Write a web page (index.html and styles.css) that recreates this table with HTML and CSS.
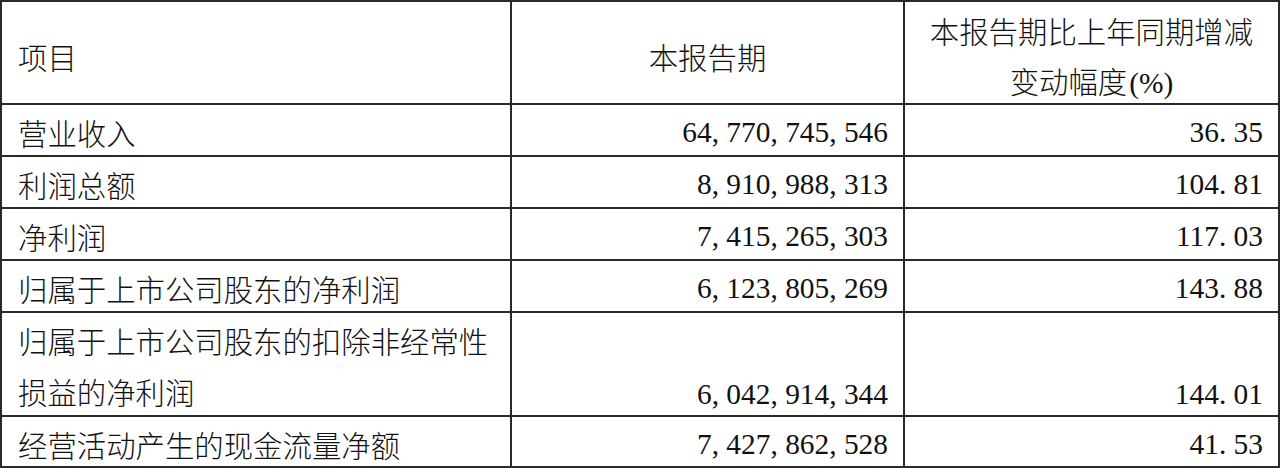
FILE: index.html
```html
<!DOCTYPE html>
<html lang="zh-CN">
<head>
<meta charset="utf-8">
<title>主要会计数据</title>
<link rel="stylesheet" href="styles.css">
</head>
<body>
<div class="sheet">
  <div class="cell head label"><span>项目</span></div>
  <div class="cell head mid"><span>本报告期</span></div>
  <div class="cell head mid"><span>本报告期比上年同期增减<br>变动幅度<span class="latin">(%)</span></span></div>

  <div class="cell label">营业收入</div>
  <div class="cell num">64<span class="sep">,</span>770<span class="sep">,</span>745<span class="sep">,</span>546</div>
  <div class="cell num">36<span class="sep">.</span>35</div>

  <div class="cell label">利润总额</div>
  <div class="cell num">8<span class="sep">,</span>910<span class="sep">,</span>988<span class="sep">,</span>313</div>
  <div class="cell num">104<span class="sep">.</span>81</div>

  <div class="cell label">净利润</div>
  <div class="cell num">7<span class="sep">,</span>415<span class="sep">,</span>265<span class="sep">,</span>303</div>
  <div class="cell num">117<span class="sep">.</span>03</div>

  <div class="cell label">归属于上市公司股东的净利润</div>
  <div class="cell num">6<span class="sep">,</span>123<span class="sep">,</span>805<span class="sep">,</span>269</div>
  <div class="cell num">143<span class="sep">.</span>88</div>

  <div class="cell label">归属于上市公司股东的扣除非经常性损益的净利润</div>
  <div class="cell num tall">6<span class="sep">,</span>042<span class="sep">,</span>914<span class="sep">,</span>344</div>
  <div class="cell num tall">144<span class="sep">.</span>01</div>

  <div class="cell label">经营活动产生的现金流量净额</div>
  <div class="cell num">7<span class="sep">,</span>427<span class="sep">,</span>862<span class="sep">,</span>528</div>
  <div class="cell num">41<span class="sep">.</span>53</div>
</div>
</body>
</html>
```

FILE: styles.css
```css
html, body {
  margin: 0;
  padding: 0;
  background: #ffffff;
}

body {
  width: 1280px;
  height: 468px;
  overflow: hidden;
  font-family: "Liberation Serif", "Noto Sans CJK SC", serif;
  font-size: 29.4px;
  color: #111111;
}

.sheet {
  display: grid;
  grid-template-columns: 508px 391px 373px;
  grid-template-rows: 101px 50px 50px 50px 50px 102px 49px;
  gap: 2px;
  padding: 2px;
  background: #2a2a2a;
  width: 1276px;
  height: 464px;
}

.cell {
  background: #ffffff;
  line-height: 51px;
  padding: 2px 15px 0 16px;
  white-space: nowrap;
  overflow: visible;
  min-width: 0;
}

.label {
  font-family: "Noto Sans CJK SC", sans-serif;
  font-weight: 300;
  white-space: normal;
  word-break: break-all;
}

.head {
  display: flex;
  align-items: center;
  padding-top: 7px;
  line-height: 50px;
}

.head.mid {
  justify-content: center;
  text-align: center;
  font-family: "Noto Sans CJK SC", sans-serif;
  font-weight: 300;
  padding-left: 0;
  padding-right: 0;
}

.latin {
  font-family: "Liberation Serif", serif;
  font-weight: 400;
  margin-left: 2px;
}

.num {
  text-align: right;
}

.num.tall {
  padding-top: 56px;
}

.sep {
  display: inline-block;
  width: 0.5em;
  text-align: left;
}
```
